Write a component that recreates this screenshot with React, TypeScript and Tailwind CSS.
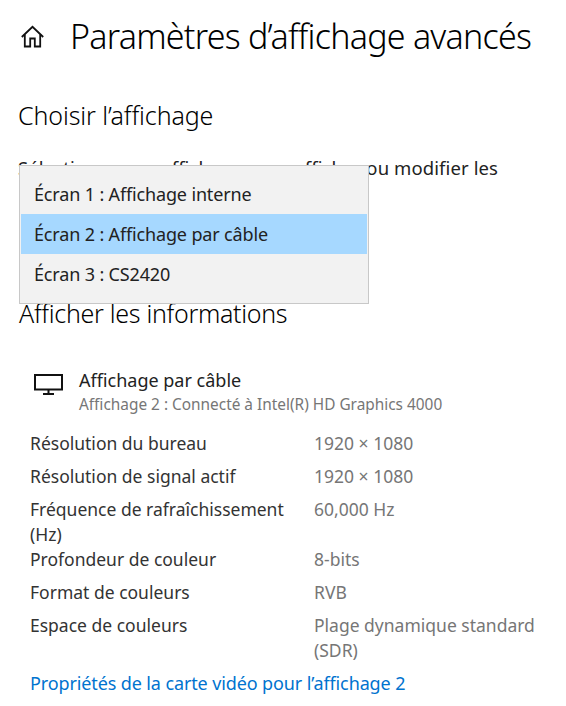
const rows = [
  { label: "Résolution du bureau", value: "1920 × 1080" },
  { label: "Résolution de signal actif", value: "1920 × 1080" },
  { label: "Fréquence de rafraîchissement (Hz)", value: "60,000 Hz" },
  { label: "Profondeur de couleur", value: "8-bits" },
  { label: "Format de couleurs", value: "RVB" },
  { label: "Espace de couleurs", value: "Plage dynamique standard (SDR)" },
]

const screens = ["Écran 1 : Affichage interne", "Écran 2 : Affichage par câble", "Écran 3 : CS2420"]

const App = () => {
  return (
    <div className="relative h-[706px] w-[566px] overflow-hidden bg-white font-['Noto_Sans','Open_Sans',sans-serif] text-black">
      <div className="flex items-center pl-[21px] pt-[11px]">
        <svg width="24" height="24" viewBox="0 0 24 24" fill="none" stroke="#111" strokeWidth="1.8" className="shrink-0">
          <path d="M.8 13 11.5 2.8 22.2 13" />
          <path d="M3.8 10.5v12h5.4v-8h4.6v8h5.4v-12" />
        </svg>
        <h1 className="ml-[25px] whitespace-nowrap text-[34px] leading-[50px] font-light tracking-[-0.75px]">Paramètres d’affichage avancés</h1>
      </div>

      <h2 className="mt-[38px] pl-[18px] text-[25px] leading-[32px] font-light tracking-[-0.1px]">Choisir l’affichage</h2>
      <p className="mt-[24px] w-[500px] pl-[19px] indent-[-1px] text-[18.5px] leading-[26px] tracking-[0.1px] text-[#222]">
        Sélectionnez un affichage pour afficher ou modifier les paramètres associés.
      </p>

      <h2 className="mt-[90px] pl-[19px] text-[25px] leading-[32px] font-light tracking-[-0.3px]">Afficher les informations</h2>

      <div className="mt-[39px] flex items-start pl-[33px]">
        <svg width="30" height="24" viewBox="0 0 30 24" fill="none" stroke="#111" className="mt-[6px] shrink-0">
          <rect x="2" y="1" width="27" height="14.5" strokeWidth="2" />
          <path d="M15.5 15.5v4M10 20h11" strokeWidth="2" />
        </svg>
        <div className="ml-[16px]">
          <div className="text-[18px] leading-[24px] text-[#222]">Affichage par câble</div>
          <div className="mt-px text-[15.4px] leading-[24px] text-[#767676]">Affichage 2 : Connecté à Intel(R) HD Graphics 4000</div>
        </div>
      </div>

      <div className="mt-[14px] flex flex-col pl-[30px] text-[17.5px] leading-[25px]">
        {rows.map((row) => (
          <div key={row.label} className="grid min-h-[33px] grid-cols-[284px_235px]">
            <span className="w-[262px] text-[#333]">{row.label}</span>
            <span className="text-[#767676]">{row.value}</span>
          </div>
        ))}
      </div>

      <a className="mt-[8px] block pl-[30px] text-[18px] leading-[25px] tracking-[-0.12px] text-[#0073cf]">
        Propriétés de la carte vidéo pour l’affichage 2
      </a>

      <ul className="absolute left-[19px] top-[165px] flex h-[139px] w-[350px] flex-col border border-[#c8c8c8] bg-[#f2f2f2] px-px pt-[8px] text-[18px] tracking-[-0.15px] text-[#222]">
        {screens.map((name, idx) => (
          <li key={name} className={`flex h-[40px] shrink-0 items-center pl-[13px] ${idx === 1 ? "bg-[#a6d8ff]" : ""}`}>
            {name}
          </li>
        ))}
      </ul>
    </div>
  )
}

export default App
